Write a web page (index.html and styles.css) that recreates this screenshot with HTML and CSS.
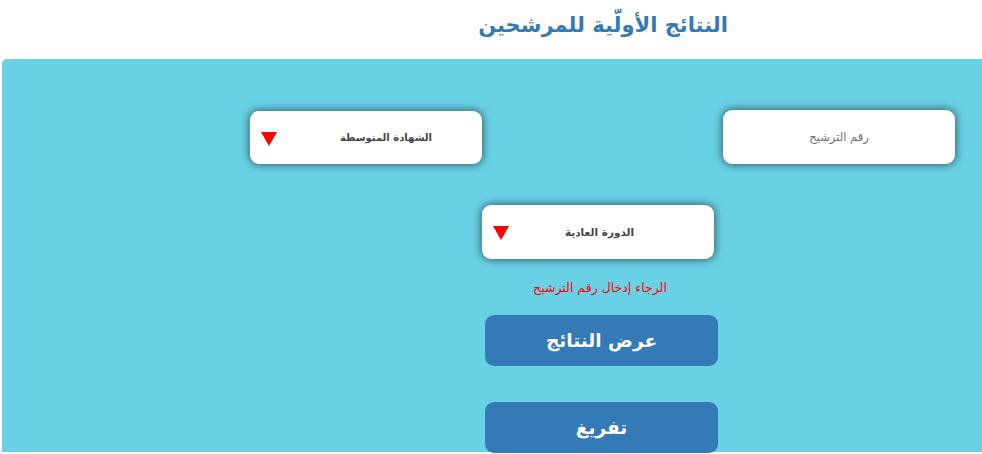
FILE: index.html
```html
<!DOCTYPE html>
<html lang="ar">
<head>
<meta charset="utf-8">
<title>النتائج الأولية للمرشحين</title>
<link rel="stylesheet" href="styles.css">
</head>
<body>
<div class="page">
  <h1 class="title">النتائج الأولّية للمرشحين</h1>
  <div class="panel">
    <div class="form">
      <div class="row row-top">
        <div class="field"><span class="placeholder">رقم الترشيح</span></div>
        <div class="field select"><span class="value">الشهادة المتوسطة</span><span class="arrow"></span></div>
      </div>
      <div class="row row-mid">
        <div class="field select"><span class="value">الدورة العادية</span><span class="arrow"></span></div>
      </div>
      <p class="error">الرجاء إدخال رقم الترشيح</p>
      <div class="actions">
        <button class="btn">عرض النتائج</button>
        <button class="btn">تفريغ</button>
      </div>
    </div>
  </div>
</div>
</body>
</html>
```

FILE: styles.css
```css
html, body {
  margin: 0;
  padding: 0;
  overflow: hidden;
  background: #fff;
  font-family: "DejaVu Sans", "Liberation Sans", sans-serif;
}
.page {
  width: 982px;
  height: 454px;
  overflow: hidden;
}
.title {
  margin: 0;
  height: 59px;
  box-sizing: border-box;
  padding: 9px 0 0 224px;
  text-align: center;
  direction: rtl;
  font-size: 21px;
  line-height: 32px;
  font-weight: bold;
  color: #337ab7;
}
.panel {
  margin-left: 2px;
  width: 980px;
  height: 393px;
  background: #69d1e5;
  border-top-left-radius: 5px;
  padding-top: 51px;
  box-sizing: border-box;
}
.form {
  width: 705px;
  margin-left: 248px;
  direction: rtl;
}
.row {
  display: flex;
}
.row-top {
  justify-content: space-between;
}
.row-top .select {
  margin-top: 1px;
  height: 53px;
}
.row-mid {
  justify-content: center;
  margin-top: 41px;
  padding-right: 10px;
}
.field {
  width: 232px;
  height: 54px;
  background: #fff;
  border-radius: 9px;
  box-shadow: 0 0 8px 1px rgba(0, 0, 0, 0.55);
  display: flex;
  align-items: center;
  justify-content: center;
  position: relative;
  font-size: 12px;
  color: #555;
}
.placeholder {
  color: #6f6f6f;
  font-size: 11.5px;
}
.value {
  font-weight: bold;
  color: #444;
  font-size: 10px;
}
.row-top .select .value {
  margin-right: 50px;
  margin-left: auto;
}
.row-mid .select .value {
  font-size: 10.5px;
  margin-left: 4px;
}
.arrow {
  position: absolute;
  left: 11px;
  top: 21px;
  width: 0;
  height: 0;
  border-left: 8px solid transparent;
  border-right: 8px solid transparent;
  border-top: 14px solid #ff0000;
}
.error {
  margin: 21px 0 0;
  text-align: center;
  color: #ff0000;
  font-size: 12.5px;
  line-height: 15px;
  padding-right: 5px;
}
.actions {
  display: flex;
  flex-direction: column;
  align-items: center;
  gap: 36px;
  margin-top: 20px;
  padding-right: 2px;
}
.btn {
  width: 233px;
  height: 51px;
  border: none;
  border-radius: 9px;
  background: #337ab7;
  color: #fff;
  font-family: "DejaVu Sans", "Liberation Sans", sans-serif;
  font-size: 18.5px;
  font-weight: bold;
  padding: 0;
}
```
